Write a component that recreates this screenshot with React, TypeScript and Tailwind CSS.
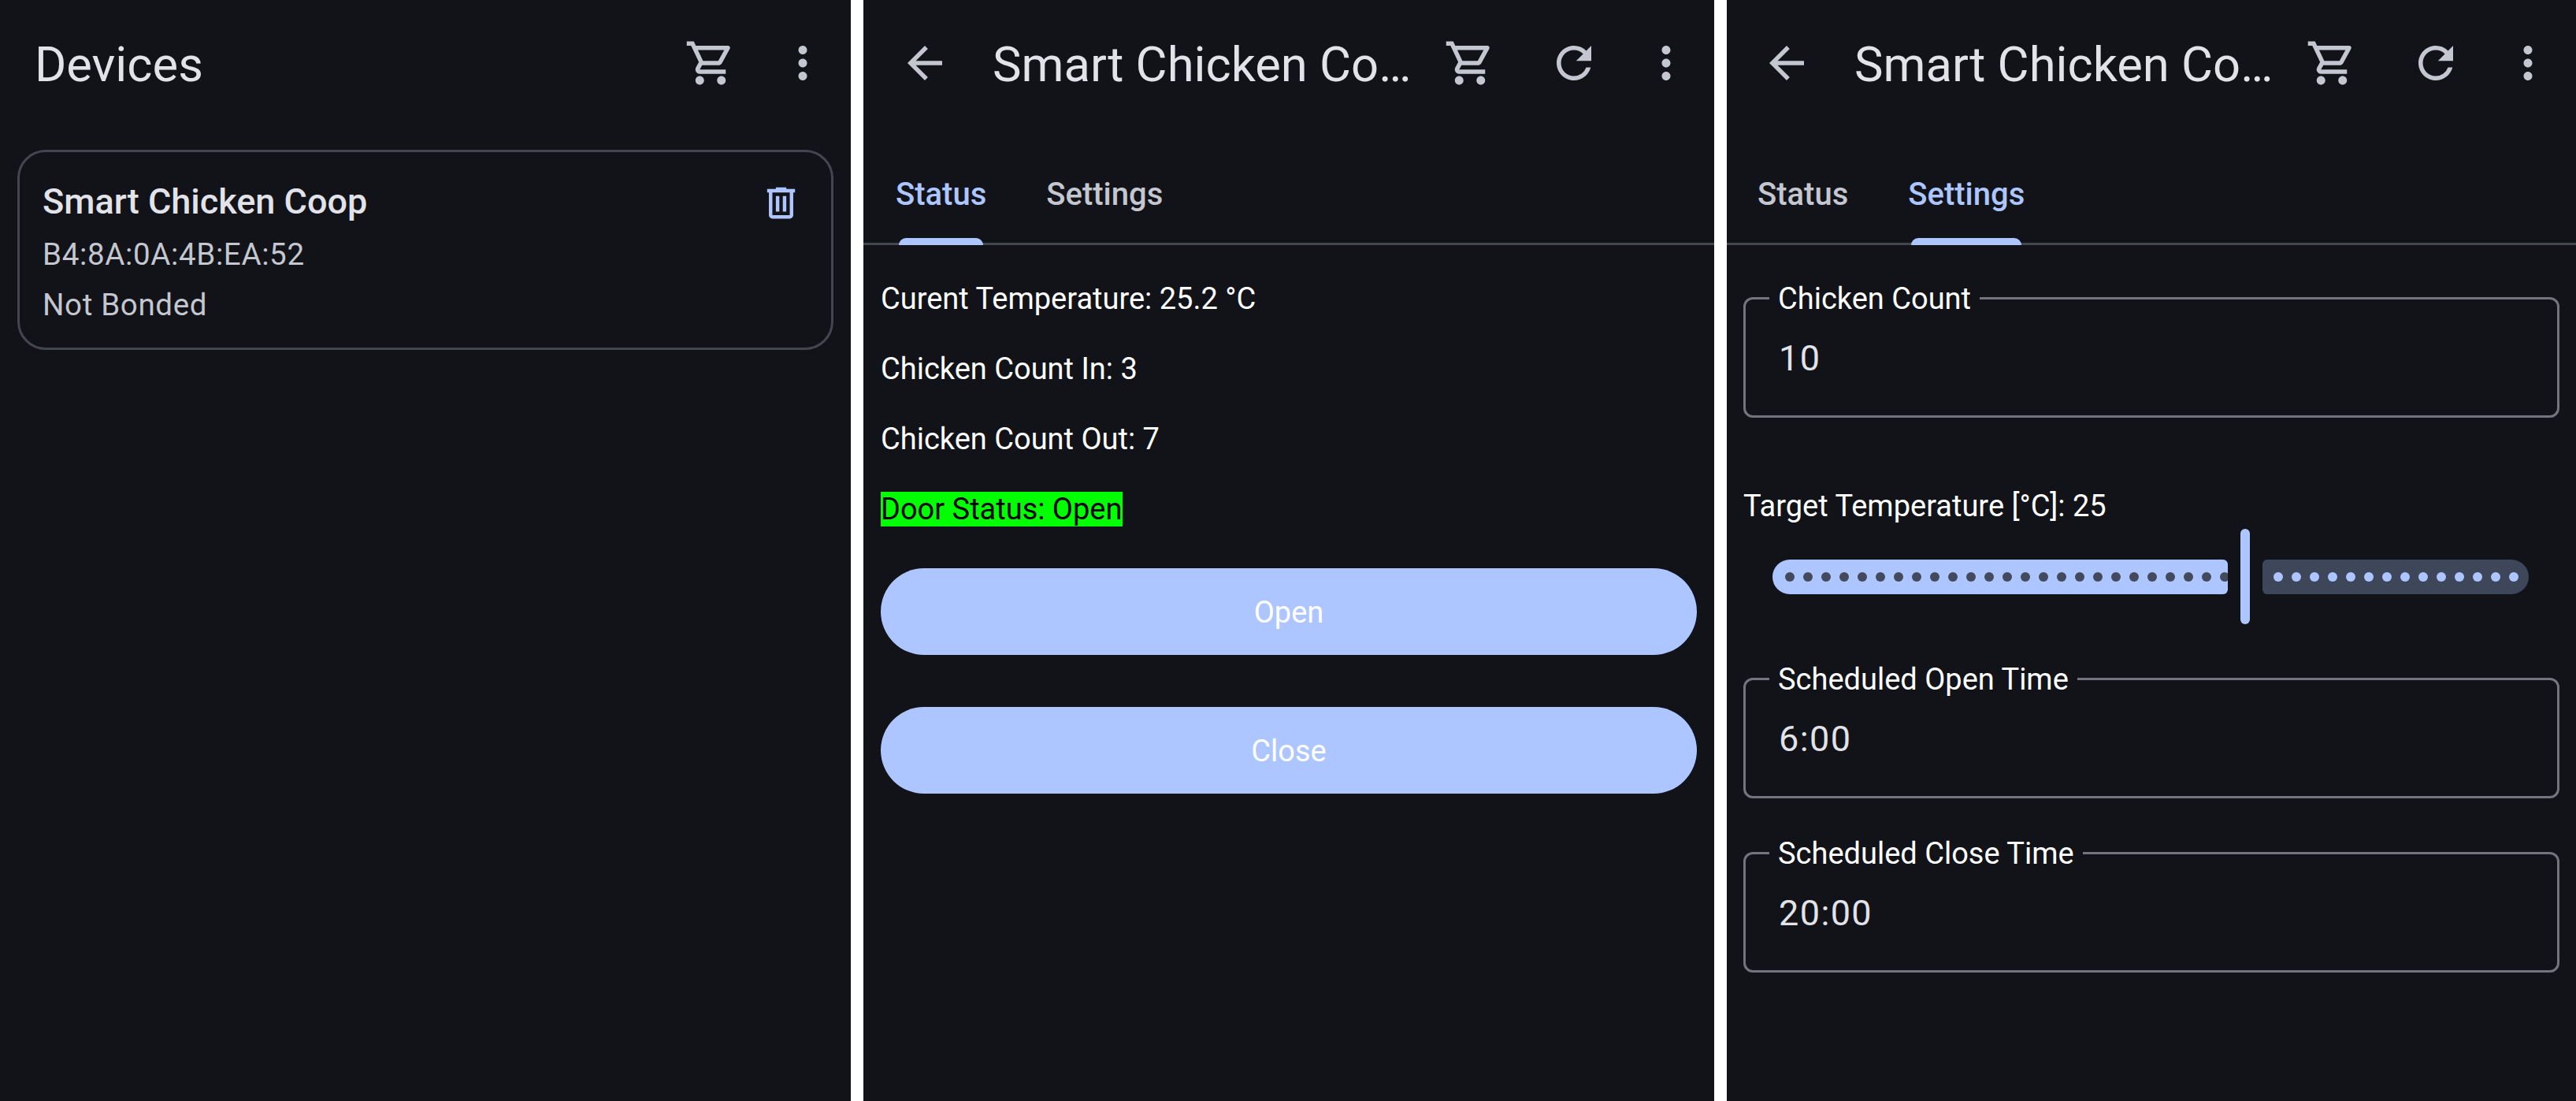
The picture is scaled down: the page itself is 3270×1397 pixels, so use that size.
import React from 'react';
import { MdArrowBack, MdMoreVert, MdOutlineShoppingCart, MdRefresh } from 'react-icons/md';

const font = { fontFamily: 'Roboto, sans-serif' };

function TrashIcon() {
  return (
    <svg viewBox="0 -960 960 960" fill="currentColor" className="mt-[6px] size-[53px] shrink-0 text-[#adc6ff]">
      <path d="M280-120q-33 0-56.5-23.5T200-200v-520h-40v-80h200v-40h240v40h200v80h-40v520q0 33-23.5 56.5T680-120H280Zm400-600H280v520h400v-520ZM360-280h80v-360h-80v360Zm160 0h80v-360h-80v360Z" />
    </svg>
  );
}

function TopBar({ title, back, refresh }: { title: string; back?: boolean; refresh?: boolean }) {
  return (
    <div className="flex h-[160px] items-center text-[#c4c6d0]">
      {back ? (
        <div className="flex w-[111px] shrink-0 justify-end">
          <MdArrowBack className="size-[66px]" />
        </div>
      ) : null}
      <div className={`mt-[4px] min-w-0 flex-1 truncate pr-[20px] text-[61.5px] leading-[84px] text-[#e2e2e9] ${back ? 'pl-[53px]' : 'pl-[44px]'}`}>
        {title}
      </div>
      <div className="mr-[28px] flex shrink-0 items-center">
        <MdOutlineShoppingCart className="size-[66px]" />
        {refresh ? <MdRefresh className="ml-[66px] size-[66px]" /> : null}
        <MdMoreVert className="ml-[51px] size-[66px]" />
      </div>
    </div>
  );
}

function Tabs({ active }: { active: 'Status' | 'Settings' }) {
  return (
    <div className="mt-[52px] flex h-[99px] gap-[76px] border-b-[3px] border-[#44464f] pl-[41px]">
      {(['Status', 'Settings'] as const).map((t) => (
        <div key={t} className="relative flex h-[96px] flex-col items-center">
          <span className={`pt-[3px] text-[40px] font-medium leading-[64px] ${t === active ? 'text-[#adc6ff]' : 'text-[#c4c6d0]'}`}>
            {t}
          </span>
          {t === active ? <span className="absolute bottom-[-3px] h-[9px] w-[calc(100%-8px)] rounded-t-[9px] bg-[#adc6ff]" /> : null}
        </div>
      ))}
    </div>
  );
}

function OutlinedField({ label, value }: { label: string; value: string }) {
  return (
    <div className="relative h-[153px] rounded-[12px] border-[3px] border-[#74757c] pl-[42px] pt-[43px] text-[45px] leading-[64px] tracking-[1.4px] text-[#e2e2e9]">
      <span className="absolute left-[30px] top-[-25px] bg-[#111318] px-[11px] text-[38px] leading-[48px] tracking-normal text-white">
        {label}
      </span>
      {value}
    </div>
  );
}

function Slider() {
  return (
    <div className="mt-[4px] flex h-[121px] items-center pl-[37px]">
      <div className="flex h-[44px] w-[578px] items-center gap-[11px] overflow-hidden rounded-l-[22px] rounded-r-[6px] bg-[#adc6ff] pl-[16px]">
        {Array.from({ length: 25 }).map((_, i) => (
          <span key={i} className="size-[12px] shrink-0 rounded-full bg-[#444a5e]" />
        ))}
      </div>
      <div className="mx-[16px] h-[121px] w-[12px] rounded-full bg-[#adc6ff]" />
      <div className="flex h-[44px] w-[338px] items-center gap-[11px] rounded-l-[6px] rounded-r-[22px] bg-[#3e4759] pl-[14px]">
        {Array.from({ length: 14 }).map((_, i) => (
          <span key={i} className="size-[12px] shrink-0 rounded-full bg-[#adc6ff]" />
        ))}
      </div>
    </div>
  );
}

export default function App() {
  return (
    <div className="flex h-[1397px] w-[3270px] justify-between overflow-hidden bg-white" style={font}>
      {/* devices list */}
      <div className="h-full w-[1080px] bg-[#111318]">
        <TopBar title="Devices" />
        <div className="mx-[22px] mt-[30px] flex h-[254px] rounded-[36px] border-[3px] border-[#44464f] pl-[29px] pr-[37px] pt-[32px]">
          <div className="flex-1">
            <div className="text-[45px] font-medium leading-[62px] text-[#e2e2e9]">Smart Chicken Coop</div>
            <div className="mt-[6px] text-[38.5px] leading-[60px] tracking-[0.65px] text-[#c4c6d0]">B4:8A:0A:4B:EA:52</div>
            <div className="mt-[4px] text-[38.5px] leading-[60px] tracking-[0.65px] text-[#c4c6d0]">Not Bonded</div>
          </div>
          <TrashIcon />
        </div>
      </div>

      {/* status tab */}
      <div className="h-full w-[1080px] bg-[#111318]">
        <TopBar title="Smart Chicken Coop" back refresh />
        <Tabs active="Status" />
        <div className="px-[22px] pt-[24px] text-[38px] leading-[89px] text-white">
          <div>Curent Temperature: 25.2 °C</div>
          <div>Chicken Count In: 3</div>
          <div>Chicken Count Out: 7</div>
          <div>
            <span className="bg-[#00ff00] text-black">Door Status: Open</span>
          </div>
          <div className="mt-[30px] flex h-[110px] items-center justify-center rounded-full bg-[#adc6ff] pt-[3px]">Open</div>
          <div className="mt-[66px] flex h-[110px] items-center justify-center rounded-full bg-[#adc6ff] pt-[3px]">Close</div>
        </div>
      </div>

      {/* settings tab */}
      <div className="h-full w-[1078px] overflow-hidden bg-[#111318]">
        <div className="ml-[-2px]">
          <TopBar title="Smart Chicken Coop" back refresh />
          <Tabs active="Settings" />
        </div>
        <div className="px-[21px] pt-[66px]">
          <OutlinedField label="Chicken Count" value="10" />
          <div className="mt-[87px] text-[38px] leading-[50px] text-white">Target Temperature [°C]: 25</div>
          <Slider />
          <div className="mt-[68px]">
            <OutlinedField label="Scheduled Open Time" value="6:00" />
          </div>
          <div className="mt-[68px]">
            <OutlinedField label="Scheduled Close Time" value="20:00" />
          </div>
        </div>
      </div>
    </div>
  );
}
